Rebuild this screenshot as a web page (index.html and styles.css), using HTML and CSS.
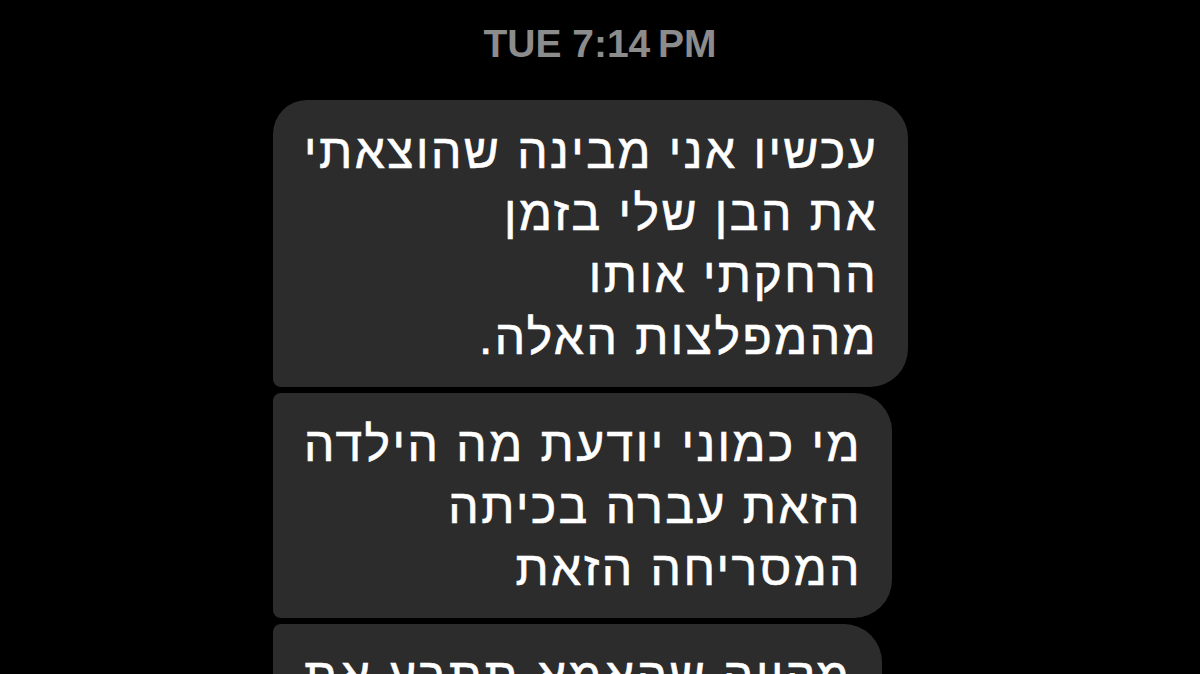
FILE: index.html
```html
<!DOCTYPE html>
<html lang="he">
<head>
    <meta charset="utf-8">
    <title>הודעות</title>
    <link rel="stylesheet" href="styles.css">
</head>
<body>

<div class="time">TUE 7:14&#8201;PM</div>

<div class="thread">
    <div class="bubble first" dir="rtl">עכשיו אני מבינה שהוצאתי<br>את הבן שלי בזמן<br>הרחקתי אותו<br>מהמפלצות האלה.</div>
    <div class="bubble middle" dir="rtl">מי כמוני יודעת מה הילדה<br>הזאת עברה בכיתה<br>המסריחה הזאת</div>
    <div class="bubble middle" dir="rtl">מקווה שהאמא תתבע את</div>
</div>

</body>
</html>
```

FILE: styles.css
```css
* {
    margin: 0;
    padding: 0;
}

html, body {
    height: 100%;
    overflow: hidden;
}

body {
    background-color: #000000;
    font-family: "Liberation Sans", Arial, sans-serif;
}

.time {
    padding-top: 24px;
    color: #8c8c8c;
    font-size: 39px;
    font-weight: bold;
    text-align: center;
    line-height: 40px;
}

.thread {
    display: flex;
    flex-direction: column;
    align-items: flex-start;
    gap: 6px;
    padding-top: 36px;
    padding-left: 273px;
}

.bubble {
    padding: 21px 30px 18px 31px;
    color: #ffffff;
    background-color: #2c2c2c;
    font-size: 48px;
    letter-spacing: 2.5px;
    line-height: 62px;
    -webkit-text-stroke: 0.6px #ffffff;
    border-radius: 8px 38px 38px 8px;
}

.bubble.first {
    border-top-left-radius: 34px;
}
```
